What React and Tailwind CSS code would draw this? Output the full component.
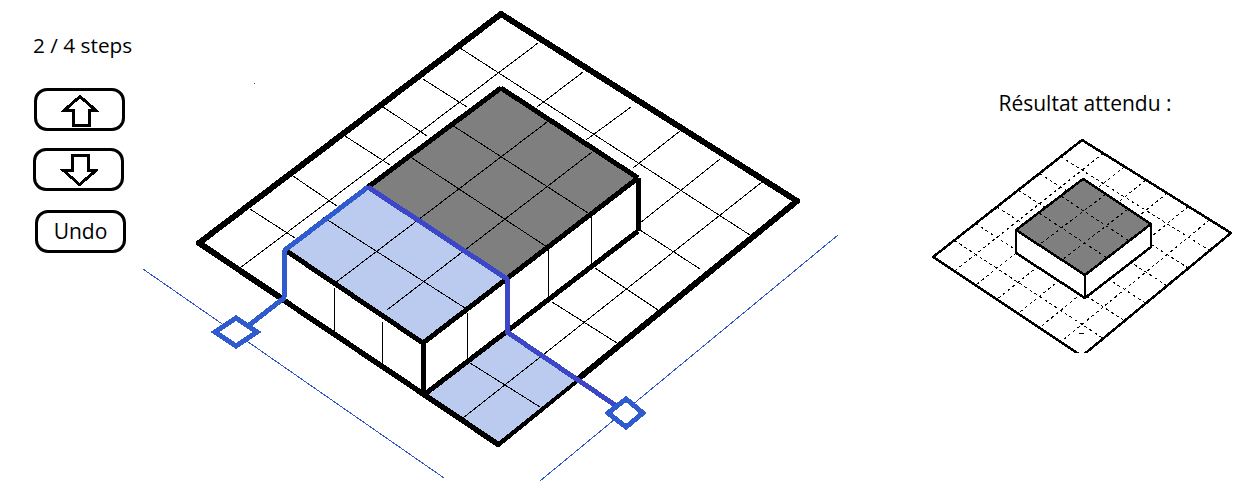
// thin floor and block lines of the main drawing, as [x1, y1, x2, y2]
const FLOOR_LINES = [
  [250, 209, 295, 238], [293, 176, 337, 206], [345, 136, 390, 165], [383, 107, 427, 136], [423, 79, 467, 107],
  [460, 48, 750, 235], [640, 230, 700, 269], [595, 268, 658, 310], [552, 302, 617, 343], [470, 363, 540, 407],
  [538, 43, 240, 268], [583, 72, 537, 107], [631, 107, 586, 140], [680, 131, 633, 168], [720, 159, 640, 223],
  [762, 182, 463, 418],
]
const TOP_LINES = [
  [547, 122, 335, 283], [592, 152, 387, 310], [452, 125, 588, 213], [412, 158, 547, 247], [323, 217, 465, 308],
]
const WALL_LINES = [
  [334, 288, 334, 332], [382, 322, 382, 363], [467, 313, 467, 360], [548, 248, 548, 297], [591, 217, 591, 265],
]
const BLACK_EDGES = [
  [501, 88, 368, 187], [501, 88, 638, 178], [638, 178, 423, 343], [285, 250, 423, 343],
  [423, 343, 423, 393], [638, 178, 638, 231], [638, 231, 425, 394], [199, 243, 498, 444],
]

function Line({ l, ...props }) {
  return <line x1={l[0]} y1={l[1]} x2={l[2]} y2={l[3]} {...props} />
}

function MainDrawing() {
  return (
    <svg width="700" height="496" viewBox="140 0 700 496" shapeRendering="crispEdges" className="block shrink-0">
      {/* thin guides */}
      <line x1="143" y1="269" x2="444" y2="478" stroke="#3056c8" />
      <line x1="838" y1="235" x2="540" y2="481" stroke="#3056c8" />

      <polygon points="501,14 797,201 498,444 199,243" fill="#fff" stroke="#000" strokeWidth="6" strokeLinejoin="round" />
      <polygon points="507,332 578,378 498,442 427,396" fill="#bbcbef" />
      <polygon points="285,250 501,88 638,178 638,231 423,394 285,300" fill="#fff" />
      <polygon points="501,88 638,178 507,279 368,187" fill="#7f7f7f" />
      <polygon points="368,187 507,279 423,343 285,250" fill="#bbcbef" />

      {FLOOR_LINES.concat(TOP_LINES, WALL_LINES).map((l, i) => (
        <Line key={i} l={l} stroke="#000" strokeWidth="1" />
      ))}
      {BLACK_EDGES.map((l, i) => (
        <Line key={i} l={l} stroke="#000" strokeWidth="5" />
      ))}

      {/* blue cut path */}
      <polyline points="248,326 284,298 285,250 368,187" fill="none" stroke="#2f5bce" strokeWidth="5" strokeLinejoin="round" />
      <polyline points="368,187 507,279 507,332 615,405" fill="none" stroke="#3c47c8" strokeWidth="5" strokeLinejoin="round" />
      <polygon points="236,318 257,332 236,346 215,332" fill="#fff" stroke="#2f5bce" strokeWidth="5" />
      <polygon points="626,399 643,413 626,427 608,413" fill="#fff" stroke="#2f5bce" strokeWidth="5" />
      <rect x="254" y="83" width="1" height="1" fill="#3056c8" />
    </svg>
  )
}

function lerp(a, b, t) {
  return [a[0] + (b[0] - a[0]) * t, a[1] + (b[1] - a[1]) * t]
}

function MiniDrawing() {
  const T = [1082, 140], R = [1231, 233], B = [1082, 356], L = [933, 257]
  const steps = [1, 2, 3, 4, 5, 6]
  return (
    <svg width="300" height="216" viewBox="932 137 300 216" shapeRendering="crispEdges" className="block">
      <polygon points="1082,140 1231,233 1082,356 933,257" fill="#fff" stroke="#000" strokeWidth="2.5" strokeLinejoin="round" />
      {steps.map(i => {
        const a = lerp(L, T, i / 7), b = lerp(B, R, i / 7)
        const c = lerp(T, R, i / 7), d = lerp(L, B, i / 7)
        return (
          <g key={i} stroke="#000" strokeWidth="1" strokeDasharray="3 3">
            <line x1={a[0]} y1={a[1]} x2={b[0]} y2={b[1]} />
            <line x1={c[0]} y1={c[1]} x2={d[0]} y2={d[1]} />
          </g>
        )
      })}
      <polygon points="1016,230 1085,275 1151,224 1151,247 1085,298 1016,253" fill="#fff" />
      <polygon points="1083,179 1151,224 1085,275 1016,230" fill="#7f7f7f" />
      <g stroke="#000" strokeWidth="1" strokeDasharray="3 3">
        <line x1="1106" y1="194" x2="1039" y2="245" />
        <line x1="1128" y1="209" x2="1062" y2="260" />
        <line x1="1061" y1="196" x2="1129" y2="241" />
        <line x1="1039" y1="213" x2="1107" y2="258" />
      </g>
      <g fill="none" stroke="#000" strokeWidth="2.5" strokeLinejoin="round">
        <polygon points="1083,179 1151,224 1085,275 1016,230" />
        <polyline points="1016,230 1016,253 1085,298 1151,247 1151,224" />
        <line x1="1085" y1="275" x2="1085" y2="298" />
      </g>
      <line x1="1079" y1="333" x2="1084" y2="333" stroke="#000" />
    </svg>
  )
}

function UpArrow() {
  return (
    <svg width="38" height="34" viewBox="0 0 38 34" shapeRendering="crispEdges">
      <path d="M19 3.5 L35 17.5 H28 V32.5 H12 V17.5 H3 Z" fill="#fff" stroke="#000" strokeWidth="3" />
    </svg>
  )
}

function DownArrow() {
  return (
    <svg width="38" height="34" viewBox="0 0 38 34" shapeRendering="crispEdges">
      <path d="M19.5 31.5 L36 17.5 H28 V2.5 H12 V17.5 H3.5 Z" fill="#fff" stroke="#000" strokeWidth="3" />
    </svg>
  )
}

function Button({ children, className = '' }) {
  return (
    <button className={`w-[91px] h-[43px] border-[3px] border-black rounded-[13px] bg-white flex items-center justify-center text-[21px] text-black ${className}`}>
      {children}
    </button>
  )
}

export default function App() {
  return (
    <div className="w-[1258px] h-[496px] bg-white flex overflow-hidden font-['Open_Sans',sans-serif] text-black">
      {/* controls */}
      <div className="w-[140px] shrink-0 pl-[33px] pt-[33px]">
        <p className="text-[20.8px] leading-[25px]">2 / 4 steps</p>
        <div className="mt-[30px] flex flex-col gap-[17px]">
          <Button className="ml-[1px]"><UpArrow /></Button>
          <Button><DownArrow /></Button>
          <Button className="ml-[2px] mt-[2px]">Undo</Button>
        </div>
      </div>

      <MainDrawing />

      {/* expected result */}
      <div className="ml-[92px] pt-[91px] w-[300px]">
        <p className="text-[21px] leading-[25px] text-center ml-[6px]">Résultat attendu :</p>
        <div className="mt-[21px]">
          <MiniDrawing />
        </div>
      </div>
    </div>
  )
}
